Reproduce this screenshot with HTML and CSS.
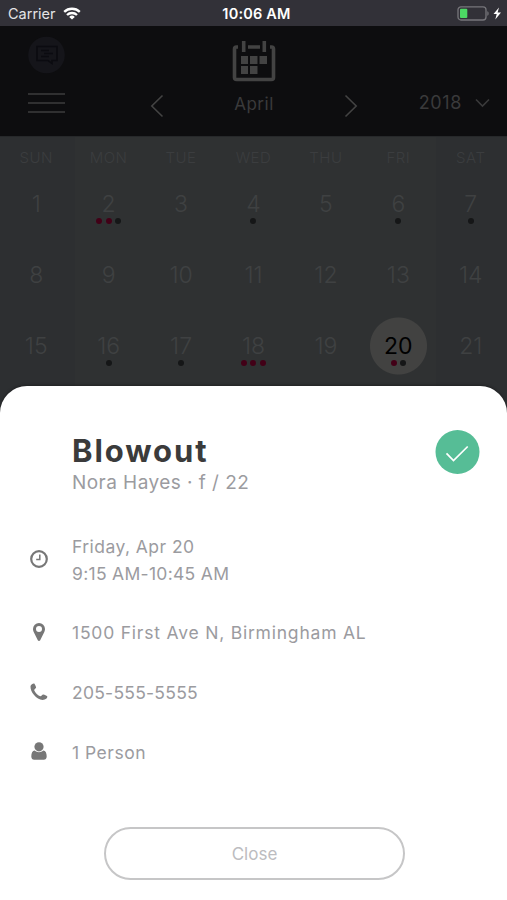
FILE: index.html
```html
<!DOCTYPE html>
<html lang="en">
<head>
  <meta charset="UTF-8">
  <title>Appointments</title>
  <link rel="stylesheet" href="styles.css">
</head>
<body>
  <div class="status-bar">
    <div class="carrier">
      <span>Carrier</span>
      <svg width="18" height="13" viewBox="0 0 18 13" fill="none" stroke="#fff" stroke-width="2.3">
        <path d="M1.2 4.9a11.2 11.2 0 0 1 15.6 0"/>
        <path d="M4 8a7.2 7.2 0 0 1 10 0"/>
        <path d="M9 12.6 6.2 9.9a4 4 0 0 1 5.6 0z" fill="#fff" stroke="none"/>
      </svg>
    </div>
    <div class="time">10:06 AM</div>
    <svg class="battery" width="45" height="15" viewBox="0 0 45 15">
      <rect x="1" y=".8" width="28" height="13.2" rx="3" fill="none" stroke="#77767b" stroke-width="1.3"/>
      <rect x="3" y="2.8" width="7.3" height="9.2" rx="1" fill="#4cd964"/>
      <path d="M30.3 5.2c1.8.6 1.8 3.9 0 4.5z" fill="#77767b"/>
      <path d="M42 1.5 36.500 8h3.2l-1.4 5.4L44 6.5h-3.4z" fill="#fff"/>
    </svg>
  </div>

  <header class="header">
    <div class="header-left">
      <svg class="chat" width="38" height="38" viewBox="0 0 38 38" fill="none">
        <circle cx="18.500" cy="19" r="18.3" fill="#15151a"/>
        <path d="M9 10.5h20v14h-5v3l-4-3H9zM13 14.5h8M16 17.5h9M13 20.5h8" stroke="#0b0b10" stroke-width="1.6"/>
      </svg>
      <div class="menu"><i></i><i></i><i></i></div>
    </div>
    <div class="month-nav">
      <svg width="14" height="24" viewBox="0 0 14 24"><path d="M12.5 1.5 1.8 12l10.7 10.5"/></svg>
      <div class="month">
        <svg width="44" height="43" viewBox="0 0 44 43">
          <path d="M6 7H4.500Q2.500 7 2.500 9v28.500q0 2 2 2h35q2 0 2-2V9q0-2-2-2H38M16 7h12M11.700 1v11M32.300 1v11" fill="none" stroke="#434343" stroke-width="3.600"/>
          <path d="M18 16h7.500v8H18zM27.500 16H35v8h-7.500zM9 16h7v8H9zM9 26h7v8H9zM18 26h7.500v8H18z" fill="#434343"/>
        </svg>
        <span>April</span>
      </div>
      <svg width="14" height="24" viewBox="0 0 14 24"><path d="M1.500 1.500 12.200 12 1.500 22.500"/></svg>
    </div>
    <div class="year">
      <span>2018</span>
      <svg width="15" height="10" viewBox="0 0 15 10"><path d="M1 1.500l6.500 6.500L14 1.500"/></svg>
    </div>
  </header>

  <main class="calendar">
    <div class="weekdays">
      <span>SUN</span><span>MON</span><span>TUE</span><span>WED</span><span>THU</span><span>FRI</span><span>SAT</span>
    </div>
    <div class="days">
      <div class="day"><span>1</span></div>
      <div class="day"><span>2</span><div class="dots"><i class="red"></i><i class="red"></i><i></i></div></div>
      <div class="day"><span>3</span></div>
      <div class="day"><span>4</span><div class="dots"><i></i></div></div>
      <div class="day"><span>5</span></div>
      <div class="day"><span>6</span><div class="dots"><i></i></div></div>
      <div class="day"><span>7</span><div class="dots"><i></i></div></div>
      <div class="day"><span>8</span></div>
      <div class="day"><span>9</span></div>
      <div class="day"><span>10</span></div>
      <div class="day"><span>11</span></div>
      <div class="day"><span>12</span></div>
      <div class="day"><span>13</span></div>
      <div class="day"><span>14</span></div>
      <div class="day"><span>15</span></div>
      <div class="day"><span>16</span><div class="dots"><i></i></div></div>
      <div class="day"><span>17</span><div class="dots"><i></i></div></div>
      <div class="day"><span>18</span><div class="dots"><i class="red"></i><i class="red"></i><i class="red"></i></div></div>
      <div class="day"><span>19</span></div>
      <div class="day selected"><span>20</span><div class="dots"><i class="red"></i><i></i></div></div>
      <div class="day"><span>21</span></div>
    </div>
  </main>

  <section class="sheet">
    <div class="sheet-head">
      <div>
        <h1>Blowout</h1>
        <p class="client">Nora Hayes · f / 22</p>
      </div>
      <svg class="check" width="45" height="45" viewBox="0 0 45 45">
        <circle cx="22.500" cy="22" r="22" fill="#56bd96"/>
        <path d="M11.500 23.300l7 7.200L32.700 16.500" fill="none" stroke="#fff" stroke-width="1.700"/>
      </svg>
    </div>

    <ul class="details">
      <li class="when">
        <svg width="20" height="20" viewBox="0 0 20 20" fill="none" stroke="#777">
          <circle cx="10" cy="9" r="7.800" stroke-width="2.200"/>
          <path d="M10.800 4.500v5H7.200" stroke-width="1.500"/>
        </svg>
        <div><span class="date">Friday, Apr 20</span><br><span class="hours">9:15 AM-10:45 AM</span></div>
      </li>
      <li>
        <svg width="20" height="20" viewBox="0 0 20 20">
          <path fill="#777" fill-rule="evenodd" d="M10 0a6 6 0 0 0-6 6c0 1.300.3 2 .7 2.900l4.100 8.400c.5 1 1.900 1 2.400 0l4.100-8.400C15.700 8 16 7.300 16 6a6 6 0 0 0-6-6zm0 3a3 3 0 1 1 0 6 3 3 0 0 1 0-6z"/>
        </svg>
        <span class="address">1500 First Ave N, Birmingham AL</span>
      </li>
      <li>
        <svg width="20" height="20" viewBox="0 0 20 20">
          <path fill="#777" d="M1.500 3C2.300 1.200 3.700.3 5.300.5c.7 1 1.400 2.400 1.800 3.700.2 1.200-2.100 2-1.900 3 .9 2.400 3.300 4.900 6 6.100 1.100.2 2-2 3.100-1.800 1.500.3 2.900 1.100 4 1.800.2 2.200-1.500 3.500-4.700 3.700C7.500 16.500 1 9 1.500 3z"/>
        </svg>
        <span class="phone">205-555-5555</span>
      </li>
      <li>
        <svg width="20" height="20" viewBox="0 0 20 20" fill="#777">
          <circle cx="10" cy="4.800" r="4.600"/>
          <path d="M5.700 8.500c2.500 2.200 6.100 2.200 8.600 0 2.400.3 3.400 2.700 3.400 6 0 2-1.200 3.300-2.900 3.300H5.200c-1.700 0-2.900-1.300-2.900-3.300 0-3.300 1-5.700 3.400-6z"/>
        </svg>
        <span class="people">1 Person</span>
      </li>
    </ul>

    <button class="close" type="button">Close</button>
  </section>
</body>
</html>
```
FILE: styles.css
```css
* {
  box-sizing: border-box;
}
body {
  margin: 0;
  height: 900px;
  position: relative;
  overflow: hidden;
  background: #2f3132;
  font-family: Inter, "Liberation Sans", sans-serif;
}
svg {
  display: block;
  flex: none;
}

/* status bar */
.status-bar {
  height: 26px;
  padding: 1px 5px 0 8px;
  display: grid;
  grid-template-columns: 1fr auto 1fr;
  align-items: center;
  background: #323138;
  color: #fff;
  font-size: 14.5px;
}
.carrier {
  display: flex;
  align-items: center;
  gap: 7px;
  color: #e4e4e6;
}
.time {
  font-weight: 600;
  font-size: 14.5px;
  letter-spacing: .2px;
  padding-left: 3px;
}
.battery {
  justify-self: end;
}

/* header */
.header {
  height: 110px;
  padding: 0 17px 0 28px;
  display: grid;
  grid-template-columns: 110px 1fr 110px;
  background: #0d0d0f;
}
.header path {
  stroke-width: 1.6;
}
.header-left {
  padding-top: 10px;
}
.menu {
  width: 37px;
  margin-top: 19px;
  display: grid;
  gap: 7px;
}
.menu i {
  height: 2px;
  background: #303031;
}
.month-nav {
  padding: 14px 22px 0 12px;
  display: flex;
  align-items: flex-start;
  justify-content: space-between;
}
.month-nav > svg {
  margin-top: 54px;
  fill: none;
  stroke: #434343;
}
.month {
  width: 60px;
  display: flex;
  flex-direction: column;
  align-items: center;
  color: #3a3a3b;
  font-size: 17px;
  line-height: 22px;
  letter-spacing: .5px;
}
.month svg path:first-child {
  stroke-width: 3.6;
}
.month svg path:last-child {
  stroke: none;
}
.month span {
  margin-top: 10px;
}
.year {
  padding-top: 66px;
  display: flex;
  align-items: flex-start;
  justify-content: flex-end;
  gap: 13px;
  color: #3a3a3b;
  font-size: 18px;
  line-height: 22px;
  letter-spacing: .6px;
}
.year svg {
  margin-top: 6px;
  fill: none;
  stroke: #3a3a3b;
}

/* calendar */
.calendar {
  height: 270px;
  border-top: 1px solid #26282a;
  background: linear-gradient(to right, #2d2f31 75px, #2f3132 75px, #2f3132 436px, #2d2f31 436px);
}
.weekdays,
.days {
  display: grid;
  grid-template-columns: repeat(7, 1fr);
  text-align: center;
}
.weekdays {
  height: 32px;
  padding-top: 11px;
  color: #3b3d3f;
  font-size: 15px;
  font-weight: 300;
  line-height: 20px;
  letter-spacing: .5px;
}
.day {
  height: 71px;
  padding-top: 20px;
  color: #3f4142;
  font-size: 23px;
  font-weight: 300;
  line-height: 30px;
}
.day span {
  display: block;
}
.dots {
  display: flex;
  justify-content: center;
  gap: 3.5px;
  margin-top: -1.5px;
}
.dots i {
  width: 6px;
  height: 6px;
  border-radius: 50%;
  background: #151617;
}
.dots .red {
  background: #420017;
}
.selected {
  background: radial-gradient(circle at 50% 35px, #424241 28px, transparent 29px);
  color: #000;
  font-weight: 400;
}

/* appointment details */
.sheet {
  position: absolute;
  left: 0;
  right: 0;
  bottom: 0;
  height: 514px;
  padding: 44px 27px 0 29px;
  border-radius: 27px 27px 0 0;
  background: #fff;
  box-shadow: 0 -1px 3px rgba(0, 0, 0, .3);
  color: #9b9ba0;
}
.sheet-head {
  height: 95px;
  padding-left: 43px;
  display: flex;
  justify-content: space-between;
  align-items: flex-start;
}
h1 {
  margin: 3px 0 0;
  color: #3b3b3b;
  font-size: 31px;
  line-height: 36px;
  letter-spacing: 1.9px;
}
.client {
  margin: 2px 0 0;
  font-size: 19px;
  line-height: 24px;
  letter-spacing: .45px;
}
.details {
  margin: 0;
  padding: 0;
  list-style: none;
  font-size: 17.5px;
  line-height: 27px;
}
.details li {
  height: 59.7px;
  display: flex;
  align-items: center;
  gap: 23px;
}
.details .when {
  height: 70px;
  margin-bottom: 8px;
}
.date {
  letter-spacing: .45px;
}
.hours {
  letter-spacing: .3px;
}
.address {
  letter-spacing: .79px;
}
.phone {
  letter-spacing: .25px;
}
.people {
  letter-spacing: .5px;
}
.close {
  display: block;
  width: 301px;
  height: 53px;
  margin: 45px auto 0 75px;
  border: 2px solid #c6c6c7;
  border-radius: 27px;
  background: #fff;
  color: #bcbcc0;
  font-family: inherit;
  font-size: 17px;
}
```
